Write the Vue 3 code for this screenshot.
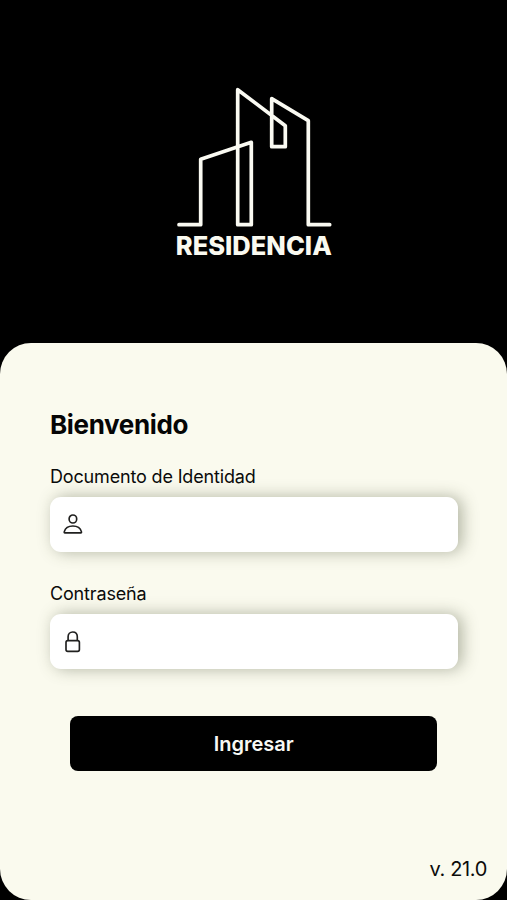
<script setup>
import { ref } from 'vue'

const documento = ref('')
const clave = ref('')
</script>

<template>
  <main class="screen">
    <header class="hero">
      <svg class="logo" viewBox="0 0 160 176" role="img" aria-label="Residencia">
        <path
          class="skyline"
          d="M6 140.7H27.7V75.3L78.3 58.3V140.7H64.7V5.7L112.3 41.7V62.7H98.7V14.7L135.3 36.7V140.7H156.7"
        />
        <text class="wordmark" x="2.8" y="171.4" textLength="156" lengthAdjust="spacingAndGlyphs">RESIDENCIA</text>
      </svg>
    </header>

    <form class="panel" @submit.prevent>
      <h1 class="title">Bienvenido</h1>

      <label class="label" for="documento">Documento de Identidad</label>
      <div class="field">
        <svg class="icon" viewBox="0 0 24 24">
          <ellipse cx="11.9" cy="7" rx="3.8" ry="4" />
          <path d="M3.9 20.9H19.8Q20.7 20.9 20.4 19.6C19.4 16 16 14 11.9 14S4.3 16 3.3 19.6Q3 20.9 3.9 20.9Z" />
        </svg>
        <input id="documento" v-model="documento" type="text" />
      </div>

      <label class="label" for="clave">Contraseña</label>
      <div class="field">
        <svg class="icon" viewBox="0 0 24 24">
          <rect x="5" y="10.6" width="13.4" height="10.7" rx="1.8" />
          <path d="M7.1 10.6V6.8C7.1 3.8 9.1 2 11.7 2S16.3 3.8 16.3 6.8V10.6" />
        </svg>
        <input id="clave" v-model="clave" type="password" />
      </div>

      <button class="submit" type="submit">Ingresar</button>
      <p class="version">v. 21.0</p>
    </form>
  </main>
</template>

<style>
body {
  background: #000;
}
</style>

<style scoped>
.screen {
  display: flex;
  flex-direction: column;
  height: 900px;
  background: #000;
  color: #0b0b0a;
  font-family: Inter, "Liberation Sans", sans-serif;
}

.hero {
  display: flex;
  justify-content: center;
  box-sizing: border-box;
  height: 342.7px;
  padding: 84px 0 0;
}

.logo {
  width: 160px;
  height: 176px;
  margin-right: 1px;
}

.skyline {
  fill: none;
  stroke: #fafaf2;
  stroke-width: 3.7;
  stroke-linecap: round;
  stroke-linejoin: round;
}

.wordmark {
  fill: #fafaf0;
  font-size: 25.5px;
  font-weight: 800;
}

.panel {
  display: flex;
  flex: 1;
  flex-direction: column;
  box-sizing: border-box;
  padding: 64.3px 49px 0 50px;
  border-radius: 31px;
  background: #fafaee;
}

.title {
  margin: 0 0 15px;
  color: #050505;
  font-size: 26px;
  font-weight: 700;
  line-height: 36px;
  letter-spacing: -0.35px;
}

.label {
  height: 24px;
  margin-bottom: 15px;
  font-size: 18px;
  line-height: 38px;
  letter-spacing: -0.16px;
}

.field {
  display: flex;
  align-items: center;
  box-sizing: border-box;
  height: 55px;
  margin-bottom: 23.5px;
  padding: 0 14px 0 11.2px;
  border-radius: 11px;
  background: #fff;
  box-shadow: 4px 0 16px rgba(75, 80, 55, 0.42);
}

.icon {
  flex: none;
  width: 24px;
  height: 24px;
  fill: none;
  stroke: #20201f;
  stroke-width: 1.65;
}

.field input {
  flex: 1;
  min-width: 0;
  margin-left: 10px;
  padding: 0;
  border: 0;
  outline: 0;
  background: transparent;
  font: inherit;
  font-size: 18px;
}

.submit {
  height: 55px;
  margin: 23.2px 21px 0 20.4px;
  padding: 0;
  border: 0;
  border-radius: 8px;
  background: #000;
  color: #f8f8f4;
  font: inherit;
  font-size: 20px;
  font-weight: 600;
}

.version {
  margin: auto -29px 19px 0;
  font-size: 20px;
  line-height: 24px;
  letter-spacing: -0.35px;
  text-align: right;
}
</style>
